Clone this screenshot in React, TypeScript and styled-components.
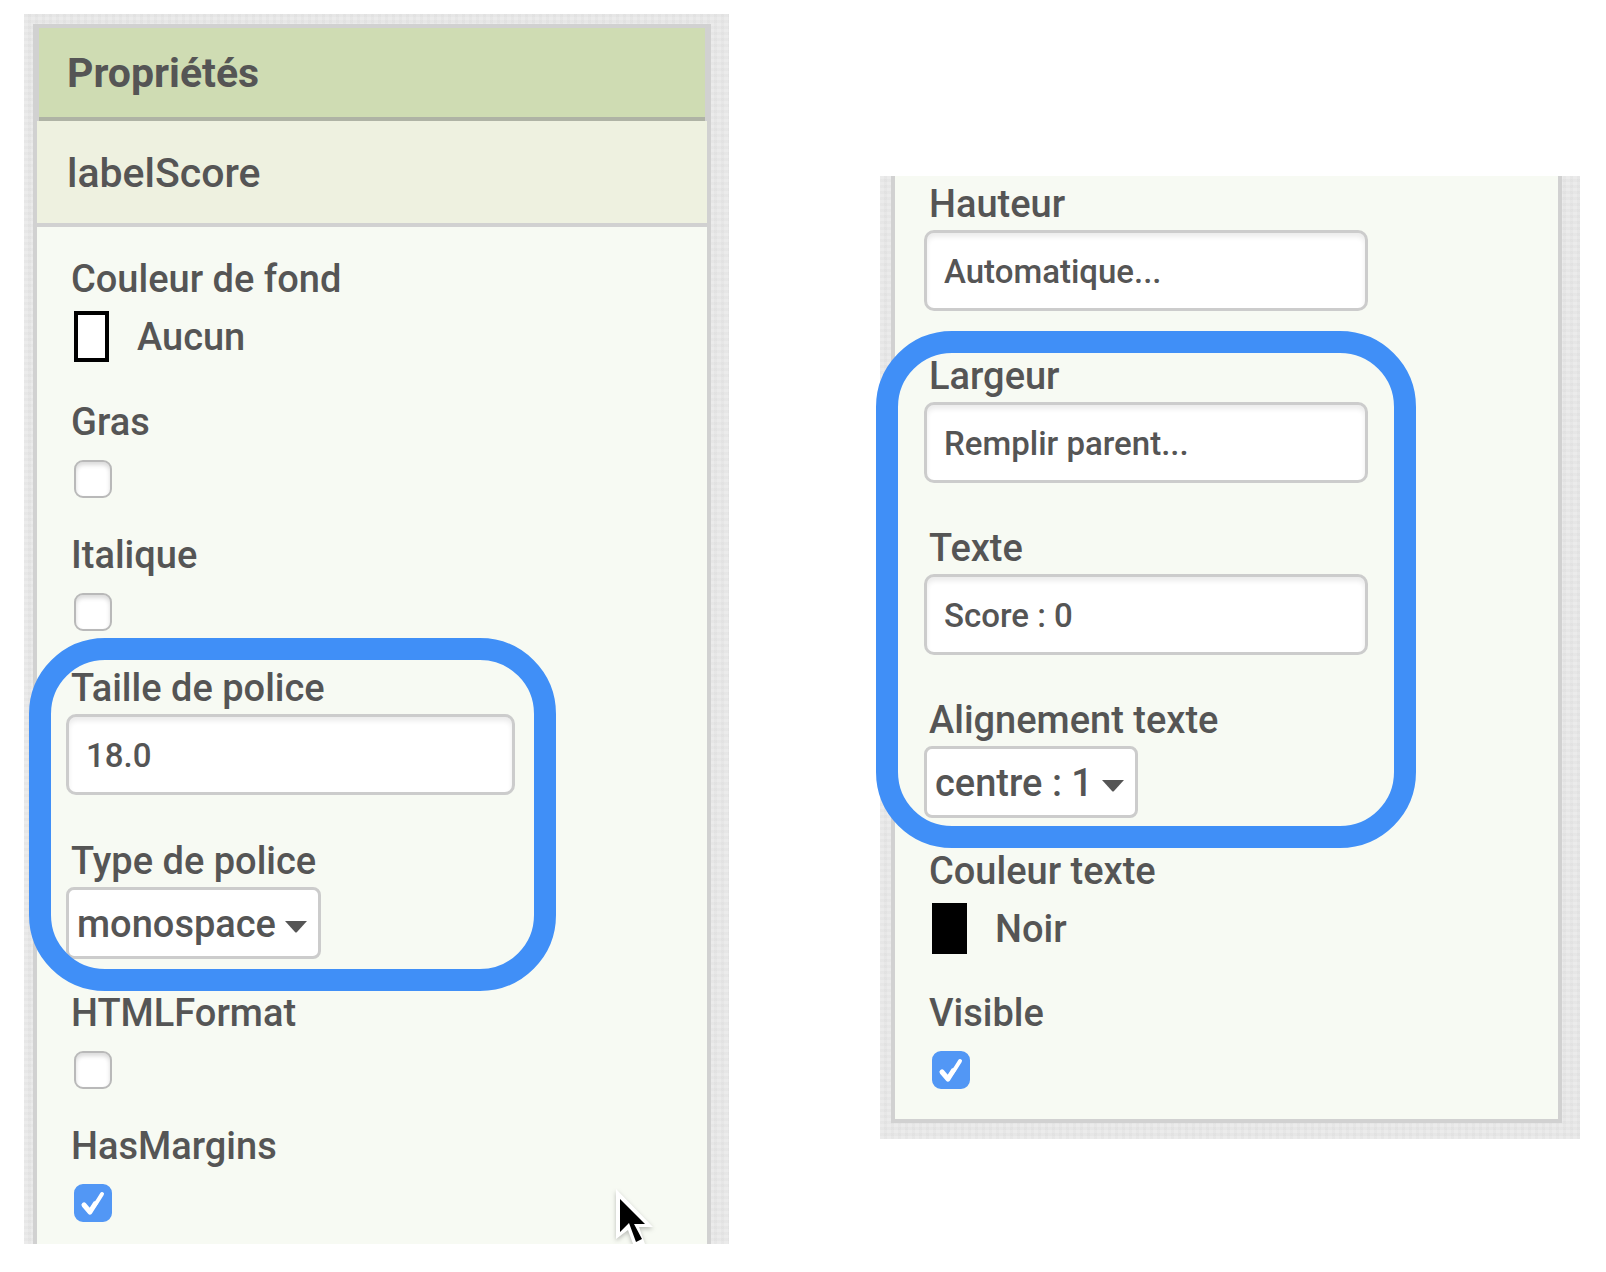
import React, { useId } from "react";
import styled, { createGlobalStyle, css } from "styled-components";

const GlobalStyle = createGlobalStyle`
  *, *::before, *::after { box-sizing: border-box; }
  body {
    margin: 0;
    background: #fff;
    color: #555;
    font-family: Roboto, "Liberation Sans", sans-serif;
    font-weight: 500;
  }
`;

const Page = styled.main`
  display: grid;
  grid-template-columns: minmax(0, 705fr) minmax(0, 700fr);
  column-gap: 151px;
  align-items: start;
  padding: 14px 26px 28px 24px;
`;

const Backdrop = styled.section<{ $part: "start" | "end" }>`
  position: relative;
  background-color: #ebebeb;
  background-image:
    repeating-linear-gradient(90deg, transparent 0 4px, rgba(0, 0, 0, 0.02) 4px 7px),
    repeating-linear-gradient(0deg, transparent 0 3px, rgba(0, 0, 0, 0.02) 3px 6px);
  ${(p) =>
    p.$part === "start"
      ? css`
          padding: 10px 18px 0 9px;
        `
      : css`
          margin-top: 162px;
          padding: 0 18px 16px 11px;
        `}
`;

const Panel = styled.div<{ $part: "start" | "end" }>`
  background: #f7faf3;
  border: 4px solid #d1d1d1;
  ${(p) => (p.$part === "start" ? "border-bottom: 0;" : "border-top: 0;")}
`;

const PanelTitle = styled.h1`
  margin: 0;
  padding: 2px 28px 4px;
  border: solid #d1d1d1;
  border-width: 0 2px;
  background: #cfdcb3;
  box-shadow: inset 0 -4px #afb3a5;
  font-size: 41px;
  font-weight: 700;
  line-height: 87px;
`;

const ComponentName = styled.h2`
  margin: 0;
  padding: 2px 30px 0;
  border-bottom: 4px solid #d1d1d1;
  background: #eef1e0;
  font-size: 41px;
  font-weight: 500;
  line-height: 100px;
`;

const Fields = styled.form<{ $part: "start" | "end" }>`
  display: flex;
  flex-direction: column;
  align-items: flex-start;
  ${(p) =>
    p.$part === "start"
      ? css`
          --input-width: 449px;
          gap: 32px;
          padding: 30px 28px 19px 29px;
        `
      : css`
          --input-width: 444px;
          gap: 31px;
          padding: 6px 28px 27px 29px;
        `}
`;

const Highlighted = styled.div<{ $ring: string }>`
  position: relative;
  display: flex;
  flex-direction: column;
  align-items: flex-start;
  gap: inherit;

  &::after {
    content: "";
    position: absolute;
    inset: ${(p) => p.$ring};
    border: 22px solid #408ff7;
    border-radius: 76px;
    pointer-events: none;
  }
`;

const Field = styled.div`
  display: flex;
  flex-direction: column;
  align-items: flex-start;
`;

const Label = styled.label`
  padding-left: 5px;
  font-size: 38px;
  line-height: 44px;
`;

const TextInput = styled.input`
  width: var(--input-width);
  max-width: 100%;
  height: 81px;
  margin: 4px 0 12px;
  padding: 2px 17px 0;
  border: 3px solid #ccc;
  border-radius: 10px;
  background: #fff;
  box-shadow: inset 0 4px 5px rgba(0, 0, 0, 0.08);
  color: inherit;
  font-family: inherit;
  font-weight: inherit;
  font-size: 33px;
`;

const SelectBox = styled.div`
  position: relative;
  display: flex;
  margin-top: 4px;
`;

const Select = styled.select`
  appearance: none;
  height: 72px;
  margin: 0;
  padding: 2px 42px 0 8px;
  border: 3px solid #ccc;
  border-radius: 8px;
  background: #fff;
  color: inherit;
  font-family: inherit;
  font-weight: inherit;
  font-size: 38px;
`;

const Caret = styled.svg`
  position: absolute;
  right: 14px;
  top: 34px;
  width: 22px;
  height: 12px;
  fill: #555;
  pointer-events: none;
`;

const CheckBoxWrap = styled.div`
  position: relative;
  display: flex;
  margin: 16px 0 3px 8px;
`;

const Checkbox = styled.input`
  appearance: none;
  width: 38px;
  height: 38px;
  margin: 0;
  border: 2px solid #b9b9b9;
  border-radius: 9px;
  background: #fff;
  box-shadow: inset 0 3px 4px rgba(0, 0, 0, 0.15);

  &:checked {
    border-color: #5297f5;
    background: #5297f5;
    box-shadow: none;
  }
`;

const Tick = styled.svg`
  position: absolute;
  inset: 0;
  width: 38px;
  height: 38px;
  fill: none;
  stroke: #fff;
  stroke-linecap: round;
  stroke-linejoin: round;
  pointer-events: none;
`;

const ColorButton = styled.button`
  display: flex;
  align-items: center;
  gap: 28px;
  margin: 10px 0 6px 8px;
  padding: 0;
  border: 0;
  background: none;
  color: inherit;
  font-family: inherit;
  font-weight: inherit;
  font-size: 38px;
  line-height: 44px;
  text-align: left;
`;

const Swatch = styled.span<{ $color: string }>`
  width: 35px;
  height: 51px;
  border: 4px solid #000;
  background: ${(p) => p.$color};
`;

const Pointer = styled.svg`
  position: absolute;
  right: 75px;
  bottom: 0;
  width: 40px;
  height: 56px;
  filter: drop-shadow(0 2px 2px rgba(0, 0, 0, 0.25));
  clip-path: inset(0 -6px 0 -6px);
`;

function TextField({ label, value }: { label: string; value: string }) {
  const id = useId();
  return (
    <Field>
      <Label htmlFor={id}>{label}</Label>
      <TextInput id={id} type="text" defaultValue={value} />
    </Field>
  );
}

function SelectField({ label, value }: { label: string; value: string }) {
  const id = useId();
  return (
    <Field>
      <Label htmlFor={id}>{label}</Label>
      <SelectBox>
        <Select id={id} defaultValue={value}>
          <option>{value}</option>
        </Select>
        <Caret viewBox="0 0 22 12" aria-hidden="true">
          <path d="M0 0H22L12 11Q11 12 10 11Z" />
        </Caret>
      </SelectBox>
    </Field>
  );
}

function CheckField({ label, checked = false }: { label: string; checked?: boolean }) {
  const id = useId();
  return (
    <Field>
      <Label htmlFor={id}>{label}</Label>
      <CheckBoxWrap>
        <Checkbox id={id} type="checkbox" defaultChecked={checked} />
        {checked && (
          <Tick viewBox="0 0 38 38" aria-hidden="true">
            <path d="M10 21L16 28L21 20" strokeWidth="5" />
            <path d="M16 27L23 18L28 10" strokeWidth="4" />
          </Tick>
        )}
      </CheckBoxWrap>
    </Field>
  );
}

function ColorField({ label, name, color }: { label: string; name: string; color: string }) {
  const id = useId();
  return (
    <Field>
      <Label htmlFor={id}>{label}</Label>
      <ColorButton id={id} type="button">
        <Swatch $color={color} />
        {name}
      </ColorButton>
    </Field>
  );
}

export default function App() {
  return (
    <>
      <GlobalStyle />
      <Page>
        <Backdrop $part="start">
          <Panel $part="start">
            <PanelTitle>Propriétés</PanelTitle>
            <ComponentName>labelScore</ComponentName>
            <Fields $part="start">
              <ColorField label="Couleur de fond" name="Aucun" color="#fff" />
              <CheckField label="Gras" />
              <CheckField label="Italique" />
              <Highlighted $ring="-28px -41px -32px -37px">
                <TextField label="Taille de police" value="18.0" />
                <SelectField label="Type de police" value="monospace" />
              </Highlighted>
              <CheckField label="HTMLFormat" />
              <CheckField label="HasMargins" checked />
            </Fields>
          </Panel>
          <Pointer viewBox="0 0 40 56" aria-hidden="true">
            <path d="M2 1V51L14 42L19 56H31L25 39H39Z" fill="#fff" />
            <path d="M6 11V44L15 35L22 54L28 51L20 36H31Z" fill="#000" />
          </Pointer>
        </Backdrop>
        <Backdrop $part="end">
          <Panel $part="end">
            <Fields $part="end">
              <TextField label="Hauteur" value="Automatique..." />
              <Highlighted $ring="-23px -48px -30px -48px">
                <TextField label="Largeur" value="Remplir parent..." />
                <TextField label="Texte" value="Score : 0" />
                <SelectField label="Alignement texte" value="centre : 1" />
              </Highlighted>
              <ColorField label="Couleur texte" name="Noir" color="#000" />
              <CheckField label="Visible" checked />
            </Fields>
          </Panel>
        </Backdrop>
      </Page>
    </>
  );
}
